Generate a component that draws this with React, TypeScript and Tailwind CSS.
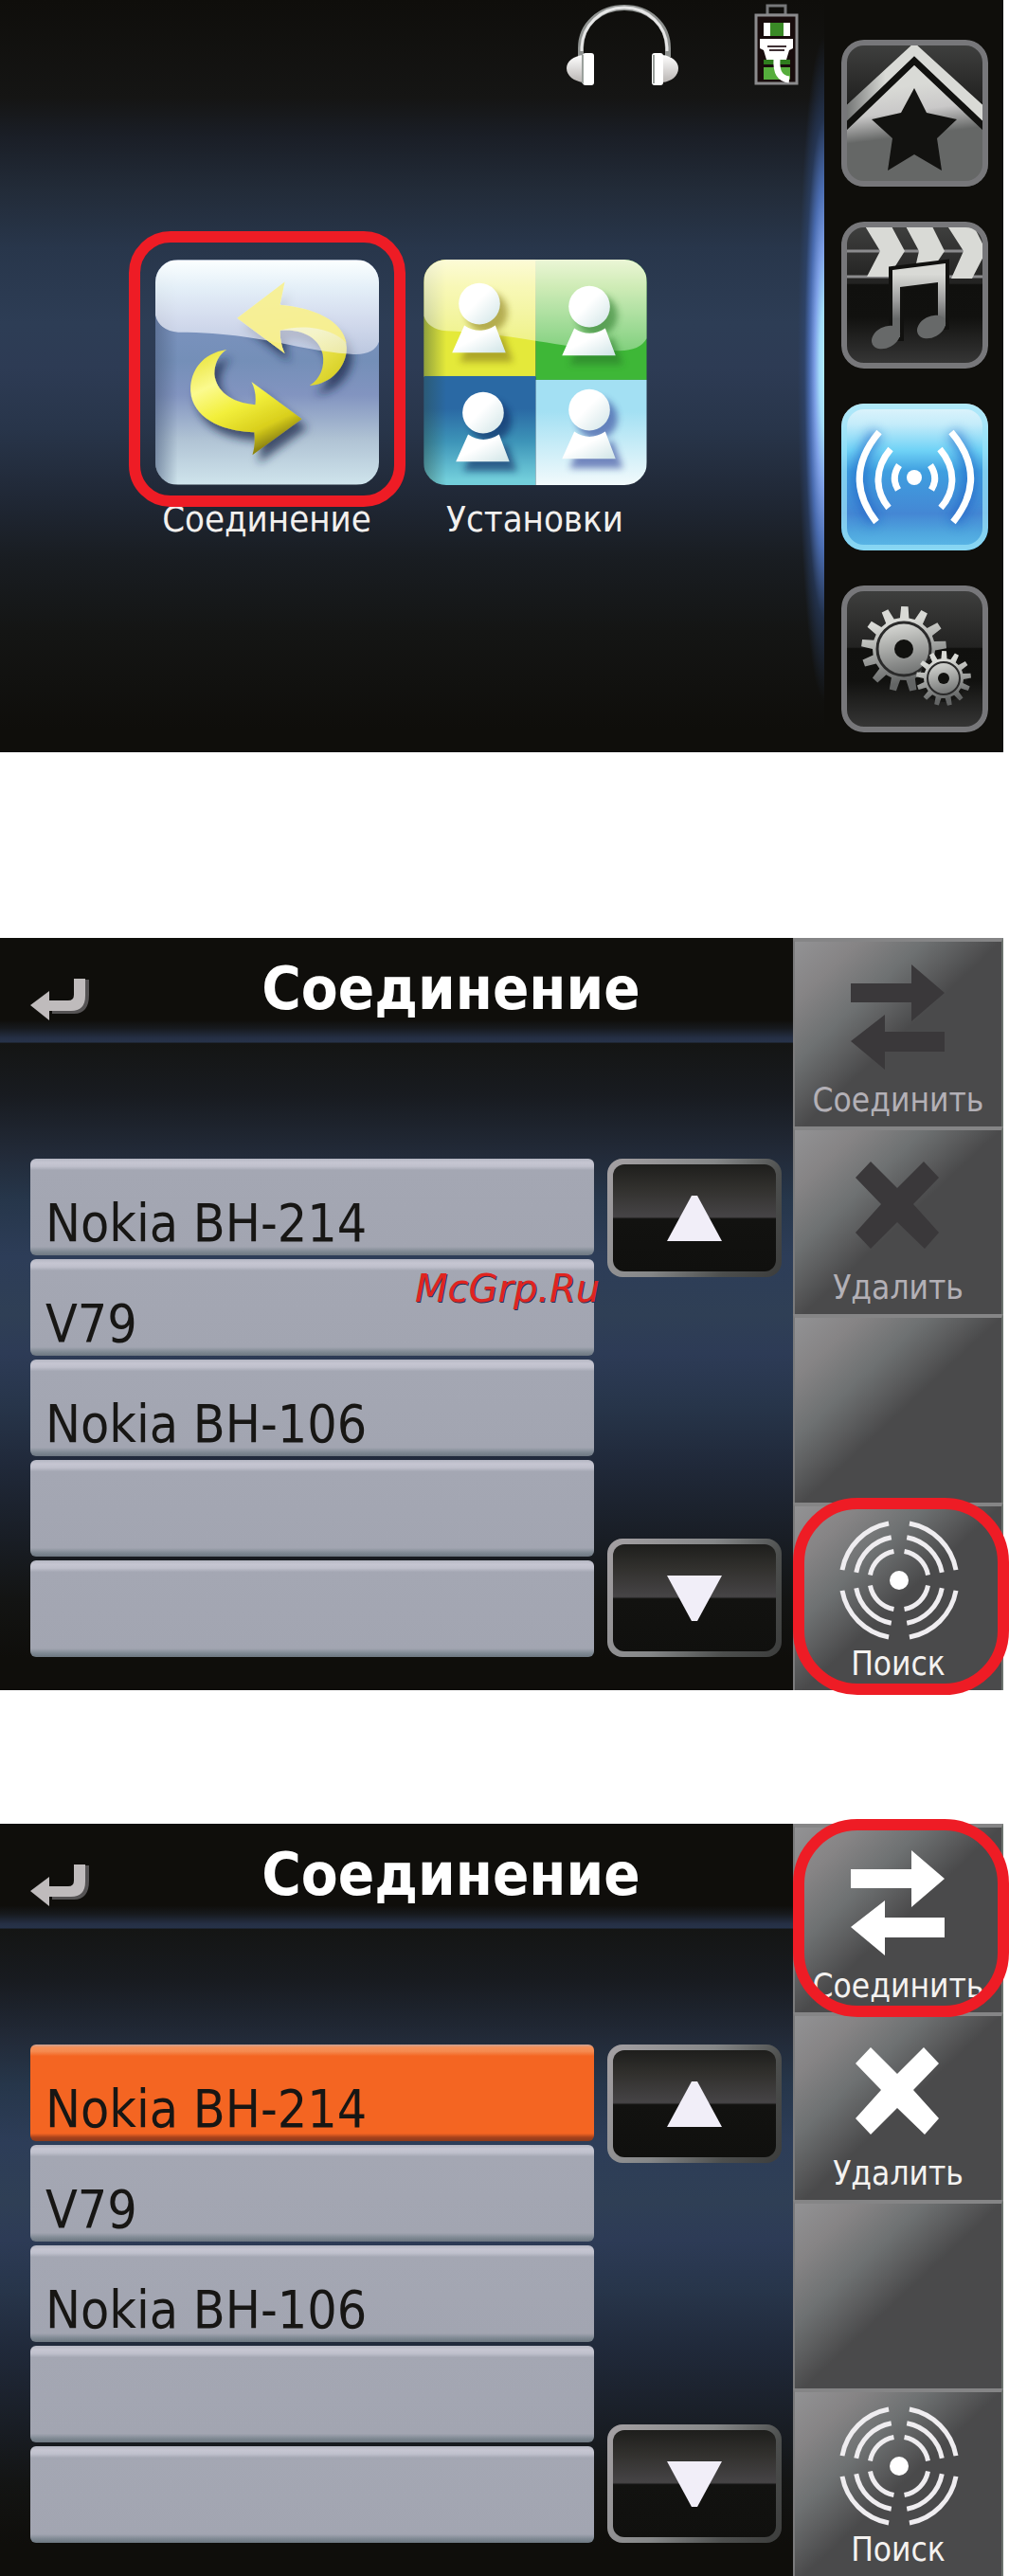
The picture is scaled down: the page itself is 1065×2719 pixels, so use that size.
import { ReactNode, useState } from "react";
import clsx from "clsx";

function gearPath(cx: number, cy: number, outer: number, inner: number, teeth: number) {
    const step = (Math.PI * 2) / teeth
    const point = (radius: number, angle: number) =>
        `${(cx + radius * Math.cos(angle)).toFixed(1)} ${(cy + radius * Math.sin(angle)).toFixed(1)}`

    let path = ''
    for (let i = 0; i < teeth; i++) {
        const a = i * step - 0.1
        path += `${i === 0 ? 'M' : 'L'}${point(inner, a - step * 0.3)}L${point(outer, a - step * 0.17)}L${point(outer, a + step * 0.17)}L${point(inner, a + step * 0.3)}`
    }
    return path + 'Z'
}

function arcs(cx: number, cy: number, radius: number) {
    const c = radius * Math.cos(0.18)
    const s = radius * Math.sin(0.18)
    return [
        [-c, -s, -s, -c],
        [s, -c, c, -s],
        [c, s, s, c],
        [-s, c, -c, s],
    ].map(([x1, y1, x2, y2]) => `M${cx + x1} ${cy + y1}A${radius} ${radius} 0 0 1 ${cx + x2} ${cy + y2}`).join('')
}

function HeadphonesIcon() {
    return (
        <svg className="w-[119px] h-[86px]" viewBox="0 0 119 86" fill="none">
            <defs>
                <linearGradient id="cup" x1="0" y1="0" x2="0" y2="1">
                    <stop offset="0" stopColor="#fff" />
                    <stop offset="1" stopColor="#b9b5b3" />
                </linearGradient>
            </defs>
            <path d="M15 56V47C15 22 35 4 61 4C87 4 107 22 107 47V56" stroke="#8f9290" strokeWidth="6" />
            <path d="M16 50V46C17 23 36 4 61 4C86 4 105 23 106 46V50" stroke="#e6e6e6" strokeWidth="3" />
            <path d="M18 54C7 55 0 61 0 68C0 76 8 82 18 83Z" fill="url(#cup)" />
            <path d="M101 54C111 55 118 61 118 68C118 76 111 82 101 83Z" fill="url(#cup)" />
            <rect x="17" y="52" width="12" height="34" rx="3" fill="#fff" />
            <rect x="90" y="52" width="12" height="34" rx="3" fill="#fff" />
            <path d="M17 54V84M92 54V84" stroke="#9aa09c" strokeWidth="2" />
        </svg>
    )
}

function BatteryIcon() {
    return (
        <svg className="w-[47px] h-[86px]" viewBox="0 0 47 86" fill="none">
            <rect x="14" y="2" width="19" height="10" stroke="#77787a" strokeWidth="3" />
            <rect x="2" y="12" width="43" height="72" fill="#180c0c" stroke="#8b8b8d" strokeWidth="3" />
            <rect x="10" y="20" width="28" height="14" fill="#3a8a26" />
            <rect x="10" y="20" width="7" height="14" fill="#fff" />
            <rect x="31" y="20" width="7" height="14" fill="#fff" />
            <rect x="10" y="59" width="28" height="5" fill="#2f7d1e" />
            <rect x="10" y="67" width="28" height="13" fill="#56ad3c" />
            <path d="M6 37H41V47L37 49L34 59H13L10 49L6 47Z" fill="#fff" />
            <path d="M14 45H34M16 49H32" stroke="#3f3034" strokeWidth="2" />
            <path d="M24 58C23 72 27 79 37 80" stroke="#fff" strokeWidth="7" />
        </svg>
    )
}

function SyncArt() {
    return (
        <svg className="w-full h-full" viewBox="0 0 235 236">
            <defs>
                <linearGradient id="syncBg" x1="0" y1="0" x2="0" y2="1">
                    <stop offset="0" stopColor="#8698c8" />
                    <stop offset="0.45" stopColor="#748fb8" />
                    <stop offset="0.6" stopColor="#8294c0" />
                    <stop offset="0.8" stopColor="#b0c3d4" />
                    <stop offset="1" stopColor="#cfe4ec" />
                </linearGradient>
                <linearGradient id="syncEdge" x1="0" y1="0" x2="1" y2="0">
                    <stop offset="0" stopColor="#4d6080" stopOpacity="0.6" />
                    <stop offset="0.1" stopColor="#4d6080" stopOpacity="0" />
                </linearGradient>
                <linearGradient id="syncGloss" x1="0" y1="0" x2="0" y2="1">
                    <stop offset="0" stopColor="#fbffff" />
                    <stop offset="0.3" stopColor="#f1fbff" stopOpacity="0.88" />
                    <stop offset="0.65" stopColor="#f4f6ff" stopOpacity="0.72" />
                    <stop offset="1" stopColor="#f6f6ff" stopOpacity="0.55" />
                </linearGradient>
                <linearGradient id="yellowUp" x1="0" y1="0" x2="1" y2="1">
                    <stop offset="0" stopColor="#f8ef8c" />
                    <stop offset="0.6" stopColor="#f5f060" />
                    <stop offset="1" stopColor="#cfc616" />
                </linearGradient>
                <linearGradient id="yellowDown" x1="0" y1="0" x2="0.5" y2="1">
                    <stop offset="0" stopColor="#e6df2c" />
                    <stop offset="0.35" stopColor="#fbfa8e" />
                    <stop offset="0.6" stopColor="#f2ef3b" />
                    <stop offset="0.85" stopColor="#d9cf1c" />
                    <stop offset="1" stopColor="#8f8610" />
                </linearGradient>
                <filter id="syncShadow" x="-20%" y="-20%" width="150%" height="150%">
                    <feDropShadow dx="6" dy="9" stdDeviation="5" floodColor="#1e2c48" floodOpacity="0.75" />
                </filter>
            </defs>
            <rect width="235" height="236" fill="url(#syncBg)" />
            <rect width="235" height="236" fill="url(#syncEdge)" />
            <path d="M86 61L136 23L131 47C164 50 199 62 201 92C201 112 185 130 162 132C174 124 178 112 176 99C172 82 155 72 131 74C131 84 133 92 136 98Z" fill="url(#yellowUp)" filter="url(#syncShadow)" />
            <path d="M75 94C48 98 36 118 37 138C39 165 68 180 104 181C105 190 104 198 102 205L154 167L101 128C105 136 106 144 105 152C80 150 64 138 62 120C62 108 67 99 75 94Z" fill="url(#yellowDown)" filter="url(#syncShadow)" />
            <path d="M0 0H235V86Q230 100 208 99C150 96 110 76 24 76Q4 74 0 58Z" fill="url(#syncGloss)" />
            <path d="M86 61L136 23L131 47C164 50 197 62 201 88C190 74 160 66 131 74C131 84 133 92 136 98Z" fill="#f6ee83" opacity="0.8" />
        </svg>
    )
}

function Person({ x, y, shadow }: { x: number; y: number; shadow: string }) {
    return (
        <g transform={`translate(${x} ${y})`}>
            <g transform="translate(8 9)" fill={shadow} opacity="0.6" filter="url(#soft)">
                <ellipse rx="22" ry="22" />
                <path d="M-16 23Q0 34 17 23L28 53H-29Z" />
            </g>
            <ellipse rx="22" ry="22" fill="url(#personFill)" />
            <path d="M-16 23Q0 34 17 23L28 52H-29Z" fill="url(#personFill)" />
        </g>
    )
}

function PeopleArt() {
    return (
        <svg className="w-full h-full" viewBox="0 0 237 240">
            <defs>
                <filter id="soft" x="-30%" y="-30%" width="160%" height="160%">
                    <feGaussianBlur stdDeviation="4" />
                </filter>
                <linearGradient id="personFill" x1="0" y1="0" x2="1" y2="1">
                    <stop offset="0.45" stopColor="#fff" />
                    <stop offset="1" stopColor="#cfe4e6" />
                </linearGradient>
                <linearGradient id="deep" x1="0" y1="0" x2="0" y2="1">
                    <stop offset="0.3" stopColor="#2a69a4" />
                    <stop offset="0.6" stopColor="#3d94b8" />
                    <stop offset="0.95" stopColor="#72cedb" />
                </linearGradient>
                <linearGradient id="pale" x1="0" y1="0" x2="0" y2="1">
                    <stop offset="0.3" stopColor="#a3e0f3" />
                    <stop offset="1" stopColor="#f2fafc" />
                </linearGradient>
                <linearGradient id="tileEdge" x1="0" y1="0" x2="1" y2="0">
                    <stop offset="0" stopColor="#2c4a40" stopOpacity="0.45" />
                    <stop offset="0.1" stopColor="#2c4a40" stopOpacity="0" />
                </linearGradient>
                <linearGradient id="tileGloss" x1="0" y1="0" x2="0" y2="1">
                    <stop offset="0" stopColor="#fffde8" stopOpacity="0.9" />
                    <stop offset="0.3" stopColor="#fffde0" stopOpacity="0.75" />
                    <stop offset="1" stopColor="#fff" stopOpacity="0.35" />
                </linearGradient>
            </defs>
            <rect width="119" height="125" fill="#e4e93a" />
            <rect x="119" width="118" height="128" fill="#3eb737" />
            <rect y="124" width="119" height="116" fill="url(#deep)" />
            <rect x="119" y="128" width="118" height="112" fill="url(#pale)" />
            <rect width="237" height="240" fill="url(#tileEdge)" />
            <path d="M0 0H237V84Q230 97 208 97C150 96 110 80 24 76Q4 74 0 60Z" fill="url(#tileGloss)" />
            <Person x={59} y={47} shadow="#8a7d1c" />
            <Person x={176} y={50} shadow="#2b7a2c" />
            <Person x={63} y={163} shadow="#0c2560" />
            <Person x={176} y={160} shadow="#2e3f96" />
        </svg>
    )
}

function HomeIcon() {
    return (
        <svg className="w-full h-full" viewBox="0 0 155 155">
            <defs>
                <linearGradient id="house" x1="0.3" y1="0" x2="0.45" y2="1">
                    <stop offset="0.2" stopColor="#d9dad6" />
                    <stop offset="0.4" stopColor="#c9c8c8" />
                    <stop offset="0.6" stopColor="#656766" />
                </linearGradient>
                <linearGradient id="roof" x1="0" y1="0" x2="1" y2="0">
                    <stop offset="0" stopColor="#666868" />
                    <stop offset="0.3" stopColor="#d9dad6" />
                </linearGradient>
            </defs>
            <path d="M77 25L155 99V155H0V99Z" fill="url(#house)" />
            <path d="M0 74L77 3L155 74V93L77 18L0 93Z" fill="url(#roof)" />
            <path d="M0 96L77 22L155 96" fill="none" stroke="#11110f" strokeWidth="7" />
            <path d="M77 51L90 77L122 84L101 104L106 138L77 121L49 138L54 104L32 84L63 77Z" fill="#121210" />
        </svg>
    )
}

function MediaIcon() {
    return (
        <svg className="w-full h-full" viewBox="0 0 155 155">
            <defs>
                <linearGradient id="note" x1="0" y1="0" x2="0" y2="1">
                    <stop offset="0.15" stopColor="#d9dad6" />
                    <stop offset="0.5" stopColor="#9d9d9d" />
                    <stop offset="0.75" stopColor="#676969" />
                </linearGradient>
            </defs>
            <path d="M0 31H155M0 58H155" stroke="#8b8b8d" strokeWidth="3" />
            <g fill="#d9dad6">
                <path d="M24 3H52L67 31L50 58H27L41 31Z" />
                <path d="M67 3H95L109 31L101 43L79 44L82 31Z" />
                <path d="M111 3H139L153 31L138 60H116L129 31Z" />
            </g>
            <path d="M54 51L110 44V110H102V64L62 69V122H54Z" fill="none" stroke="#11110f" strokeWidth="8" />
            <path d="M54 51L110 44V110H102V64L62 69V122H54Z" fill="url(#note)" />
            <g fill="#676969">
                <ellipse cx="47" cy="122" rx="16" ry="11" transform="rotate(-28 47 122)" />
                <ellipse cx="95" cy="111" rx="16" ry="11" transform="rotate(-28 95 111)" />
            </g>
        </svg>
    )
}

function WirelessIcon() {
    return (
        <svg className="w-full h-full" viewBox="0 0 155 155" fill="none">
            <defs>
                <filter id="waveGlow" x="-30%" y="-30%" width="160%" height="160%">
                    <feGaussianBlur stdDeviation="6" />
                </filter>
            </defs>
            <g stroke="#1f5fc4" strokeWidth="14" opacity="0.6" filter="url(#waveGlow)">
                <path d="M38 31C13 62 13 96 36 125M117 31C142 62 142 96 118 125" />
            </g>
            <g stroke="#fff" strokeWidth="7">
                <path d="M40 30C13 62 13 94 37 125M116 30C143 62 143 94 118 125" />
                <path d="M52 48C35 68 35 92 50 110M104 48C121 68 121 92 105 110" />
                <path d="M61 65C55 74 55 83 60 91M94 65C100 74 100 83 95 91" />
            </g>
            <circle cx="77" cy="78" r="8" fill="#fff" />
        </svg>
    )
}

function GearsIcon() {
    return (
        <svg className="w-full h-full" viewBox="0 0 155 155">
            <defs>
                <linearGradient id="gear" x1="0.3" y1="0" x2="0.5" y2="1">
                    <stop offset="0.2" stopColor="#d9dad6" />
                    <stop offset="0.9" stopColor="#636565" />
                </linearGradient>
            </defs>
            <path d={gearPath(66, 67, 45, 33, 13)} fill="url(#gear)" />
            <circle cx="66" cy="67" r="28" fill="none" stroke="#2a2a2a" strokeWidth="3" />
            <circle cx="66" cy="67" r="10" fill="#11110f" />
            <circle cx="108" cy="98" r="25" fill="#161614" />
            <path d={gearPath(108, 98, 29, 21, 13)} fill="url(#gear)" />
            <circle cx="108" cy="98" r="17" fill="none" stroke="#2a2a2a" strokeWidth="2" />
            <circle cx="108" cy="98" r="6" fill="#11110f" />
        </svg>
    )
}

function SwapIcon() {
    return (
        <svg className="w-32 h-32" viewBox="0 0 128 128" fill="currentColor">
            <path d="M14 29H78V9L113 39L78 69V49H14Z" />
            <path d="M14 90L50 62V80H113V101H50V120Z" />
        </svg>
    )
}

function CrossIcon() {
    return (
        <svg className="w-32 h-32" viewBox="0 0 128 128" fill="currentColor">
            <path d="M35 19L63 47L91 19L107 36L80 64L107 94L92 111L63 83L35 111L19 94L46 64L19 36Z" />
        </svg>
    )
}

function SearchIcon() {
    return (
        <svg className="w-32 h-32" viewBox="0 0 128 128" fill="none">
            <path d={arcs(65, 64, 61) + arcs(65, 64, 46) + arcs(65, 64, 31)} stroke="#efedf0" strokeWidth="5" />
            <circle cx="65" cy="64" r="10" fill="#fff" />
        </svg>
    )
}

function BackIcon() {
    return (
        <svg className="w-[63px] h-[46px]" viewBox="0 0 63 46">
            <path d="M51 2H62V18Q62 38 46 38H23V27H44Q51 27 51 19Z" fill="#555354" />
            <path d="M46 1H58V19Q58 35 43 35H20V45L0 29L20 14V24H40Q46 24 46 18Z" fill="#bfbbbc" />
        </svg>
    )
}

function Highlight({ className }: { className: string }) {
    return <span className={clsx("absolute z-10 border-[12px] border-[#ee1c25] pointer-events-none", className)} />
}

function Tile({ label, art, children }: { label: string; art: ReactNode; children?: ReactNode }) {
    return (
        <button className="relative w-[236px] flex flex-col items-center gap-4 text-[38px] leading-10 text-[#f2f0ee]">
            <span className="block w-full h-[238px] rounded-3xl overflow-hidden">{art}</span>
            {label}
            {children}
        </button>
    )
}

function NavButton({ label, active, children }: { label: string; active?: boolean; children: ReactNode }) {
    return (
        <button
            aria-label={label}
            className={clsx(
                "relative w-[155px] h-[155px] rounded-3xl overflow-hidden",
                active
                    ? "bg-[linear-gradient(#e2f5fc_0%,#c4ecfa_14%,#6fd2f6_32%,#3f9fe0_46%,#4487d4_75%,#4fa6de_88%,#5cbbe8_100%)]"
                    : "bg-[linear-gradient(#414241_0%,#2c2c2b_28%,#222221_42%,#10100e_43%,#11110f_65%,#3a3a3a_100%)]"
            )}
        >
            {children}
            <span className={clsx("absolute inset-0 rounded-3xl border-[6px]", active ? "border-[#9be2f8]/70" : "border-[#77777a]")} />
        </button>
    )
}

function MenuScreen() {
    return (
        <section className="flex bg-[#0f0e0b]">
            <div className="relative flex-1 flex flex-col bg-[linear-gradient(#0f0e0b_0%,#151514_13%,#1a1e26_18%,#222b38_25%,#28364b_33%,#2d3d55_43%,#2d3b54_49%,#28354a_57%,#202836_66%,#191d22_74%,#141514_84%,#0f0e0b_97%)]">
                <header className="flex justify-end gap-[79px] pt-1 pr-[27px]">
                    <HeadphonesIcon />
                    <BatteryIcon />
                </header>
                <div className="flex justify-center gap-[47px] pt-[184px] pr-6">
                    <Tile label="Соединение" art={<SyncArt />}>
                        <Highlight className="-inset-x-7 -top-[30px] h-[291px] rounded-[44px]" />
                    </Tile>
                    <Tile label="Установки" art={<PeopleArt />} />
                </div>
                <div className="absolute right-0 inset-y-0 w-7 bg-[radial-gradient(28px_350px_at_100%_49%,#b0eafd_0%,#a3dcf9_18%,#7d9fe6_36%,#4a6cb0_55%,#2f4a7c80_75%,transparent_100%)]" />
            </div>
            <nav className="w-[189px] flex flex-col items-center gap-[37px] pt-[42px] pb-[21px] pl-0.5">
                <NavButton label="Избранное"><HomeIcon /></NavButton>
                <NavButton label="Медиа"><MediaIcon /></NavButton>
                <NavButton label="Связь" active><WirelessIcon /></NavButton>
                <NavButton label="Настройки"><GearsIcon /></NavButton>
            </nav>
        </section>
    )
}

function ScrollButton({ label, direction }: { label: string; direction: 'up' | 'down' }) {
    return (
        <button
            aria-label={label}
            className="h-[125px] p-1.5 rounded-2xl bg-[linear-gradient(120deg,#a5a1a4_0%,#858788_45%,#4c4e4d_75%,#3c3d3c_100%)]"
        >
            <span className="flex h-full items-center justify-center rounded-xl bg-[linear-gradient(#1e1e1c_0%,#31302d_22%,#464446_49%,#121210_51%,#10100e_100%)]">
                <svg className="w-[58px] h-12" viewBox="0 0 58 48" fill="#f1eef8">
                    {direction === 'up' ? <path d="M26 0H32L58 48H0Z" /> : <path d="M0 0H58L32 48H26Z" />}
                </svg>
            </span>
        </button>
    )
}

type ActionProps = {
    label?: string
    icon?: ReactNode
    disabled?: boolean
    highlighted?: boolean
}

function Action({ label, icon, disabled, highlighted }: ActionProps) {
    return (
        <button
            disabled={disabled || !label}
            aria-label={label ?? 'Пусто'}
            className="relative flex flex-col items-center justify-end gap-1 pb-2 border-t-4 border-x-2 border-t-[#858586] border-l-[#7b7b7c] border-r-[#6a716c] bg-[linear-gradient(137deg,#929294_0%,#868485_16%,#6e7172_32%,#5c5d5e_42%,#4a4a4b_51%)]"
        >
            <span className={disabled ? "text-[#3a383a]" : "text-white"}>{icon}</span>
            <span className={clsx("text-[35px] leading-10", disabled ? "text-[#b3b0b6]" : "text-[#f4f2f0]")}>{label}</span>
            {highlighted && <Highlight className="-left-0.5 -right-2 -top-[9px] -bottom-[5px] rounded-[68px]" />}
        </button>
    )
}

const devices = ['Nokia BH-214', 'V79', 'Nokia BH-106', '', '']

type ConnectionScreenProps = {
    initial?: number
    highlight: 'search' | 'connect'
    watermark?: boolean
}

function ConnectionScreen({ initial = -1, highlight, watermark }: ConnectionScreenProps) {
    const [selected, setSelected] = useState(initial)
    const disabled = selected < 0

    return (
        <section className="relative flex bg-[#0f0e0b]">
            <div className="flex-1 flex flex-col">
                <header className="h-[111px] flex items-start gap-5 pl-8 pt-[18px] bg-[linear-gradient(#0f0e0b_78%,#171a1e_86%,#252f44_95%,#27334a_99%,#171a1e_100%)]">
                    <button aria-label="Назад" className="mt-6"><BackIcon /></button>
                    <h1 className="flex-1 text-center text-[63px] leading-[72px] font-bold text-white">Соединение</h1>
                </header>
                <div className="flex gap-[14px] pt-[122px] pb-[35px] pl-8 pr-3 bg-[linear-gradient(#141514_0%,#181b20_8%,#222a38_17%,#26364a_24%,#2d3d58_33%,#2f3f55_42%,#2d3b56_48%,#27354a_56%,#20293a_65%,#191e26_76%,#131413_86%,#0f0e0b_95%)]">
                    <ul className="flex-1 flex flex-col gap-1">
                        {devices.map((device, index) => (
                            <li key={index}>
                                <button
                                    aria-label={device || 'Пусто'}
                                    onClick={() => device && setSelected(index)}
                                    className={clsx(
                                        "w-full h-[102px] flex items-end pl-4 pb-1 rounded-md text-[55px] leading-[60px] text-[#171614]",
                                        selected === index
                                            ? "bg-[linear-gradient(#c9a498_0%,#f79058_3%,#f58b50_7%,#f46522_12%,#f46522_92%,#a8421c_96%,#8a3a1c_100%)]"
                                            : "bg-[linear-gradient(#b4b6c2_0%,#c6c6d2_4%,#bfc0cc_8%,#a4a7b3_12%,#a2a5b1_91%,#7f8993_96%,#6d7781_100%)]"
                                    )}
                                >
                                    {device}
                                </button>
                            </li>
                        ))}
                    </ul>
                    <div className="w-[184px] flex flex-col justify-between">
                        <ScrollButton label="Вверх" direction="up" />
                        <ScrollButton label="Вниз" direction="down" />
                    </div>
                </div>
            </div>
            <aside className="w-[222px] grid grid-rows-4">
                <Action label="Соединить" icon={<SwapIcon />} disabled={disabled} highlighted={highlight === 'connect'} />
                <Action label="Удалить" icon={<CrossIcon />} disabled={disabled} />
                <Action />
                <Action label="Поиск" icon={<SearchIcon />} highlighted={highlight === 'search'} />
            </aside>
            {watermark && (
                <span className="absolute left-[438px] top-[346px] text-[40px] leading-[48px] italic font-['DejaVu_Sans',sans-serif] text-[#e0241f] [text-shadow:1px_1px_0_#23325a]">
                    McGrp.Ru
                </span>
            )}
        </section>
    )
}

export default function App() {
    return (
        <main className="flex flex-col bg-white pr-1.5 font-['DejaVu_Sans_Condensed','DejaVu_Sans',sans-serif]">
            <MenuScreen />
            <div className="mt-[196px]">
                <ConnectionScreen highlight="search" watermark />
            </div>
            <div className="mt-[141px]">
                <ConnectionScreen initial={0} highlight="connect" />
            </div>
        </main>
    )
}
